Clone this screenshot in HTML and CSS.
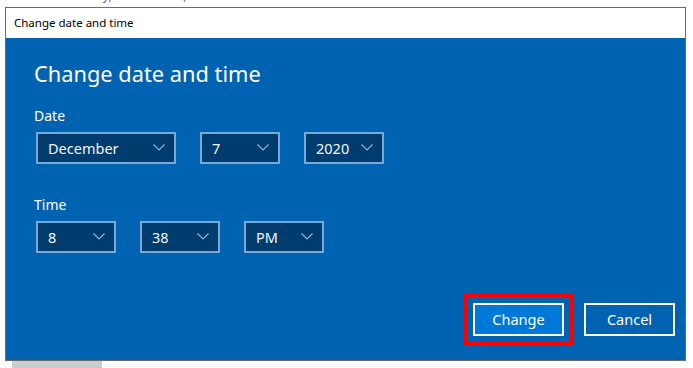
FILE: index.html
```html
<!DOCTYPE html>
<html>
<head>
<meta charset="utf-8">
<link rel="stylesheet" href="styles.css">
</head>
<body>
<div class="strip"><span class="strip-text">9:38 PM Monday, December 7, 2020</span></div>
<div class="window">
  <div class="titlebar">Change date and time</div>
  <div class="content">
    <h1 class="heading">Change date and time</h1>
    <div class="label label-date">Date</div>
    <div class="row">
      <div class="select w-month"><span>December</span><svg class="chev" width="12" height="7" viewBox="0 0 12 7"><polyline points="0.5,0.5 6,6 11.5,0.5" fill="none" stroke="#8db4dc" stroke-width="1.2"/></svg></div>
      <div class="select w-small"><span>7</span><svg class="chev" width="12" height="7" viewBox="0 0 12 7"><polyline points="0.5,0.5 6,6 11.5,0.5" fill="none" stroke="#8db4dc" stroke-width="1.2"/></svg></div>
      <div class="select w-small"><span>2020</span><svg class="chev" width="12" height="7" viewBox="0 0 12 7"><polyline points="0.5,0.5 6,6 11.5,0.5" fill="none" stroke="#8db4dc" stroke-width="1.2"/></svg></div>
    </div>
    <div class="label label-time">Time</div>
    <div class="row">
      <div class="select w-small"><span>8</span><svg class="chev" width="12" height="7" viewBox="0 0 12 7"><polyline points="0.5,0.5 6,6 11.5,0.5" fill="none" stroke="#8db4dc" stroke-width="1.2"/></svg></div>
      <div class="select w-small"><span>38</span><svg class="chev" width="12" height="7" viewBox="0 0 12 7"><polyline points="0.5,0.5 6,6 11.5,0.5" fill="none" stroke="#8db4dc" stroke-width="1.2"/></svg></div>
      <div class="select w-small"><span>PM</span><svg class="chev" width="12" height="7" viewBox="0 0 12 7"><polyline points="0.5,0.5 6,6 11.5,0.5" fill="none" stroke="#8db4dc" stroke-width="1.2"/></svg></div>
    </div>
    <div class="buttons">
      <div class="btn btn-primary">Change</div>
      <div class="btn">Cancel</div>
    </div>
  </div>
</div>
<div class="shadow-bar"></div>
</body>
</html>
```
FILE: styles.css
```css
html, body {
  margin: 0;
  padding: 0;
  background: #ffffff;
  font-family: "Noto Sans", "Open Sans", sans-serif;
}
.strip {
  height: 7px;
  overflow: hidden;
  padding-left: 15px;
}
.strip-text {
  display: block;
  margin-top: -11px;
  font-size: 12px;
  line-height: 14px;
  color: #666;
}
.window {
  margin-left: 5px;
  width: 679px;
  height: 352px;
  border: 1px solid #6b6b6b;
  display: flex;
  flex-direction: column;
}
.titlebar {
  height: 30px;
  line-height: 30px;
  padding-left: 8px;
  font-size: 11.5px;
  color: #000;
  background: #fff;
}
.content {
  flex: 1;
  background: #0063b1;
  display: flex;
  flex-direction: column;
  padding: 21px 10px 24px 28px;
  color: #fff;
}
.heading {
  margin: 0;
  font-size: 21.8px;
  font-weight: 400;
  line-height: 30px;
  color: #fff;
}
.label {
  font-size: 14px;
  line-height: 20px;
  color: #fff;
}
.label-date { margin-top: 17px; }
.label-time { margin-top: 31px; }
.row {
  display: flex;
  gap: 24px;
  margin-top: 6px;
  padding-left: 2px;
}
.select {
  box-sizing: border-box;
  height: 32px;
  border: 2px solid #76a8d8;
  background: #003c6e;
  display: flex;
  align-items: center;
  justify-content: space-between;
  padding: 0 9px 1px 10px;
  font-size: 14.5px;
  color: #f2f6fa;
}
.w-month { width: 140px; }
.w-small { width: 80px; }
.chev { display: block; }
.buttons {
  margin-top: auto;
  display: flex;
  justify-content: flex-end;
  gap: 20px;
}
.btn {
  box-sizing: border-box;
  width: 91px;
  height: 33px;
  border: 2px solid #ffffff;
  display: flex;
  align-items: center;
  justify-content: center;
  padding-bottom: 1px;
  font-size: 14.5px;
  color: #fff;
}
.btn-primary {
  background: #0078d7;
  outline: 3px solid #ff0000;
  outline-offset: 6px;
}
.shadow-bar {
  margin-left: 12px;
  width: 90px;
  height: 7px;
  background: #cccccc;
}
```
